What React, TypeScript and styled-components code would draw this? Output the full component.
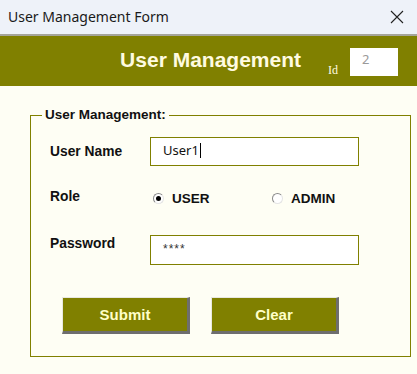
import React from "react";
import styled, { createGlobalStyle } from "styled-components";

const Global = createGlobalStyle`
  html, body { margin: 0; padding: 0; }
  body {
    background: #fefef4;
    font-family: "Liberation Sans", Arial, sans-serif;
    width: 417px;
    height: 374px;
    overflow: hidden;
  }
`;

const Window = styled.div`
  width: 417px;
  height: 374px;
  display: flex;
  flex-direction: column;
  background: #fefef4;
`;

const TitleBar = styled.div`
  height: 34px;
  flex: none;
  display: flex;
  align-items: center;
  justify-content: space-between;
  padding: 0 12px 0 8px;
  background: #eef2f9;
  border-bottom: 2px solid #a4a49a;
`;

const TitleText = styled.span`
  font-family: "Noto Sans", "Open Sans", sans-serif;
  font-size: 14px;
  color: #1a1a1a;
  margin-top: -1px;
`;

const CloseButton = styled.span`
  display: flex;
  align-items: center;
  justify-content: center;
  width: 16px;
  height: 16px;
`;

const Header = styled.div`
  height: 50px;
  flex: none;
  display: flex;
  align-items: center;
  justify-content: flex-end;
  padding-right: 19px;
  background: #808000;
`;

const HeaderTitle = styled.span`
  font-family: "Liberation Sans", Arial, sans-serif;
  font-weight: bold;
  font-size: 21px;
  color: #fffbe0;
  margin-right: 27px;
  margin-top: -2px;
`;

const IdLabel = styled.span`
  font-family: "Liberation Serif", "Times New Roman", serif;
  font-size: 12px;
  color: #fffbe0;
  margin-right: 12px;
  margin-top: 18px;
`;

const IdBox = styled.div`
  width: 48px;
  height: 28px;
  box-sizing: border-box;
  background: #ffffff;
  padding: 3px 0 0 12px;
  font-family: "Noto Sans", "Open Sans", sans-serif;
  font-size: 13px;
  line-height: 16px;
  color: #9a9a9a;
  margin-top: 2px;
`;

const Body = styled.div`
  padding: 21px 29px 0 30px;
`;

const Frame = styled.fieldset`
  margin: 0;
  width: 358px;
  box-sizing: border-box;
  border: 1px solid #808000;
  padding: 14px 19px 22px 19px;
  display: flex;
  flex-direction: column;
`;

const Legend = styled.legend`
  margin-left: -8px;
  padding: 0 3px;
  font-weight: bold;
  font-size: 13.5px;
  line-height: 16px;
  color: #111;
`;

const Row = styled.div<{ $mt?: number }>`
  display: flex;
  align-items: flex-start;
  margin-top: ${(p) => p.$mt ?? 0}px;
`;

const Label = styled.span<{ $pt?: number }>`
  width: 100px;
  flex: none;
  font-weight: bold;
  font-size: 13.8px;
  line-height: 15px;
  color: #111;
  padding-top: ${(p) => p.$pt ?? 0}px;
`;

const TextBox = styled.div<{ $h: number }>`
  width: 209px;
  height: ${(p) => p.$h}px;
  box-sizing: border-box;
  border: 1px solid #808000;
  background: #ffffff;
  padding: 3px 12px 0 12px;
  font-family: "Noto Sans", "Open Sans", sans-serif;
  font-size: 13px;
  line-height: 18px;
  color: #111;
  display: flex;
  align-items: flex-start;
`;

const Caret = styled.span`
  display: inline-block;
  width: 0;
  height: 15px;
  border-left: 1px solid #000;
  margin-top: 2px;
  margin-left: 1px;
`;

const Stars = styled.span`
  font-family: "Liberation Sans", Arial, sans-serif;
  font-size: 12px;
  letter-spacing: 1px;
  color: #333;
  margin-top: 1px;
`;

const Options = styled.div`
  display: flex;
  padding-left: 3px;
  padding-top: 3px;
`;

const Option = styled.label`
  width: 119px;
  display: flex;
  align-items: center;
  gap: 8px;
  font-weight: bold;
  font-size: 13.5px;
  line-height: 15px;
  color: #111;
`;

const Radio = styled.span<{ $checked?: boolean }>`
  width: 11px;
  height: 11px;
  box-sizing: border-box;
  border-radius: 50%;
  border: 1px solid;
  border-color: #8a8a8a #e4e4e4 #e4e4e4 #8a8a8a;
  background: #ffffff;
  display: flex;
  align-items: center;
  justify-content: center;
  &::after {
    content: "";
    width: 5px;
    height: 5px;
    border-radius: 50%;
    background: ${(p) => (p.$checked ? "#000" : "transparent")};
  }
`;

const Buttons = styled.div`
  display: flex;
  gap: 21px;
  margin-top: 32px;
  padding-left: 12px;
`;

const Button = styled.button`
  width: 128px;
  height: 37px;
  box-sizing: border-box;
  background: #808000;
  border-style: solid;
  border-width: 1px 3px 3px 1px;
  border-color: #e8e8e0 #6e6e6e #6e6e6e #e8e8e0;
  font-family: "Liberation Sans", Arial, sans-serif;
  font-weight: bold;
  font-size: 15px;
  color: #ffffc8;
  padding: 0;
  cursor: pointer;
`;

export default function App() {
  return (
    <>
      <Global />
      <Window>
        <TitleBar>
          <TitleText>User Management Form</TitleText>
          <CloseButton>
            <svg width="14" height="14" viewBox="0 0 14 14">
              <path d="M1 1 L13 13 M13 1 L1 13" stroke="#222" strokeWidth="1.1" />
            </svg>
          </CloseButton>
        </TitleBar>
        <Header>
          <HeaderTitle>User Management</HeaderTitle>
          <IdLabel>Id</IdLabel>
          <IdBox>2</IdBox>
        </Header>
        <Body>
          <Frame>
            <Legend>User Management:</Legend>
            <Row>
              <Label $pt={7}>User Name</Label>
              <TextBox $h={29}>
                User1
                <Caret />
              </TextBox>
            </Row>
            <Row $mt={22}>
              <Label $pt={1}>Role</Label>
              <Options>
                <Option>
                  <Radio $checked />
                  USER
                </Option>
                <Option>
                  <Radio />
                  ADMIN
                </Option>
              </Options>
            </Row>
            <Row $mt={29}>
              <Label $pt={1}>Password</Label>
              <TextBox $h={30}>
                <Stars>****</Stars>
              </TextBox>
            </Row>
            <Buttons>
              <Button>Submit</Button>
              <Button>Clear</Button>
            </Buttons>
          </Frame>
        </Body>
      </Window>
    </>
  );
}
